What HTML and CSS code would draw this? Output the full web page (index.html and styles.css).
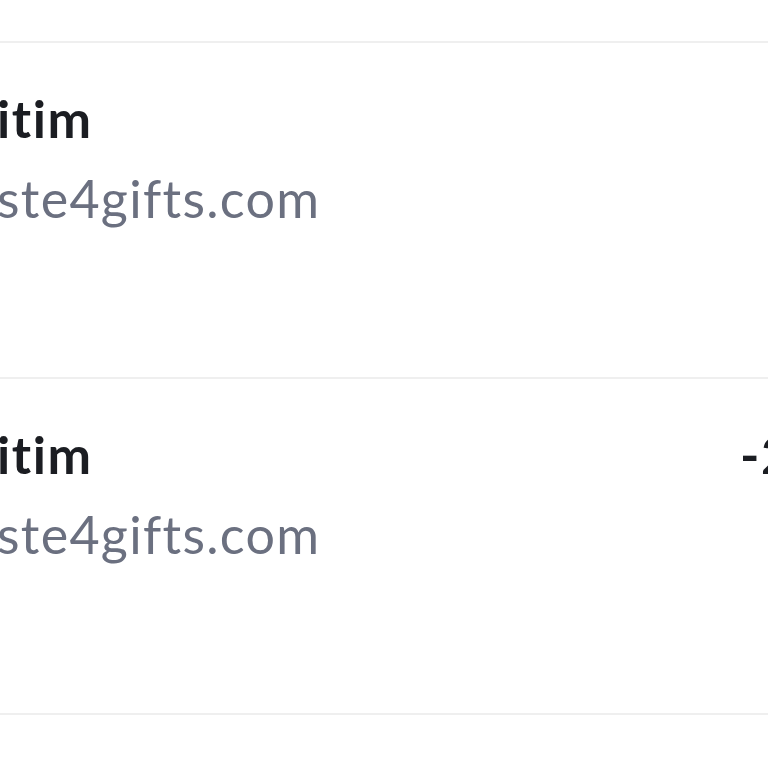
FILE: index.html
```html
<!DOCTYPE html>
<html lang="tr">
<head>
    <meta charset="UTF-8">
    <meta name="viewport" content="width=device-width, initial-scale=1.0">
    <title>Hareketler</title>
    <link rel="stylesheet" href="styles.css">
</head>
<body>
    <!-- Transactions list -->
    <div class="tx-list">
        <div class="tx-row">
            <div class="tx-main">
                <div class="tx-title">itim</div>
                <div class="tx-sub">ste4gifts.com</div>
            </div>
        </div>
        <div class="tx-row">
            <div class="tx-main">
                <div class="tx-title">itim</div>
                <div class="tx-sub">ste4gifts.com</div>
            </div>
            <div class="tx-amount">-24,90</div>
        </div>
        <div class="tx-row"></div>
    </div>
</body>
</html>
```

FILE: styles.css
```css
/* Global Styles */
* {
    box-sizing: border-box;
    margin: 0;
    padding: 0;
}
html, body {
    overflow: hidden;
}
body {
    background-color: #fff;
    font-family: Lato, "Noto Sans", sans-serif;
    color: #1b1d22;
    width: 768px;
    height: 768px;
}

/* List */
.tx-list {
    padding-top: 41px;
}
.tx-row {
    display: flex;
    align-items: flex-start;
    height: 336px;
    border-top: 2px solid #efefef;
    padding-top: 46px;
}
.tx-main {
    flex: 1;
    margin-left: -3px;
}
.tx-title {
    font-size: 52px;
    font-weight: 700;
    line-height: 58px;
    letter-spacing: 1.6px;
    margin-bottom: 22px;
}
.tx-sub {
    font-size: 52px;
    line-height: 58px;
    letter-spacing: 1.3px;
    color: #6b7080;
    white-space: nowrap;
}
.tx-amount {
    flex-shrink: 0;
    width: 28px;
    font-size: 52px;
    font-weight: 700;
    line-height: 58px;
    letter-spacing: 1.5px;
    white-space: nowrap;
}
```
